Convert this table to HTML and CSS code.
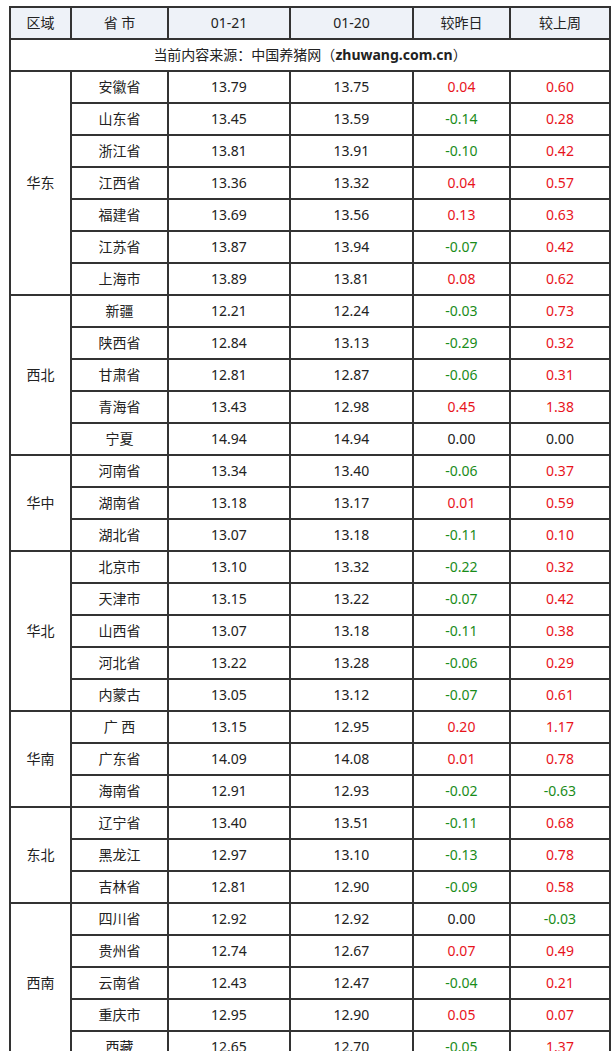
FILE: index.html
```html
<!DOCTYPE html>
<html lang="zh">
<head>
<meta charset="utf-8">
<title>生猪价格</title>
<link rel="stylesheet" href="styles.css">
</head>
<body>
<table class="price">
  <colgroup>
    <col class="c-region"><col class="c-prov"><col class="c-day"><col class="c-day2"><col class="c-diff"><col class="c-diff2">
  </colgroup>
  <thead>
    <tr class="head"><th>区域</th><th>省 市</th><th>01-21</th><th>01-20</th><th>较昨日</th><th>较上周</th></tr>
  </thead>
  <tbody>
    <tr class="source"><td colspan="6">当前内容来源：中国养猪网（<b>zhuwang.com.cn</b>）</td></tr>
    <tr><td rowspan="7">华东</td><td>安徽省</td><td>13.79</td><td>13.75</td><td class="up">0.04</td><td class="up">0.60</td></tr>
    <tr><td>山东省</td><td>13.45</td><td>13.59</td><td class="down">-0.14</td><td class="up">0.28</td></tr>
    <tr><td>浙江省</td><td>13.81</td><td>13.91</td><td class="down">-0.10</td><td class="up">0.42</td></tr>
    <tr><td>江西省</td><td>13.36</td><td>13.32</td><td class="up">0.04</td><td class="up">0.57</td></tr>
    <tr><td>福建省</td><td>13.69</td><td>13.56</td><td class="up">0.13</td><td class="up">0.63</td></tr>
    <tr><td>江苏省</td><td>13.87</td><td>13.94</td><td class="down">-0.07</td><td class="up">0.42</td></tr>
    <tr><td>上海市</td><td>13.89</td><td>13.81</td><td class="up">0.08</td><td class="up">0.62</td></tr>
    <tr><td rowspan="5">西北</td><td>新疆</td><td>12.21</td><td>12.24</td><td class="down">-0.03</td><td class="up">0.73</td></tr>
    <tr><td>陕西省</td><td>12.84</td><td>13.13</td><td class="down">-0.29</td><td class="up">0.32</td></tr>
    <tr><td>甘肃省</td><td>12.81</td><td>12.87</td><td class="down">-0.06</td><td class="up">0.31</td></tr>
    <tr><td>青海省</td><td>13.43</td><td>12.98</td><td class="up">0.45</td><td class="up">1.38</td></tr>
    <tr><td>宁夏</td><td>14.94</td><td>14.94</td><td>0.00</td><td>0.00</td></tr>
    <tr><td rowspan="3">华中</td><td>河南省</td><td>13.34</td><td>13.40</td><td class="down">-0.06</td><td class="up">0.37</td></tr>
    <tr><td>湖南省</td><td>13.18</td><td>13.17</td><td class="up">0.01</td><td class="up">0.59</td></tr>
    <tr><td>湖北省</td><td>13.07</td><td>13.18</td><td class="down">-0.11</td><td class="up">0.10</td></tr>
    <tr><td rowspan="5">华北</td><td>北京市</td><td>13.10</td><td>13.32</td><td class="down">-0.22</td><td class="up">0.32</td></tr>
    <tr><td>天津市</td><td>13.15</td><td>13.22</td><td class="down">-0.07</td><td class="up">0.42</td></tr>
    <tr><td>山西省</td><td>13.07</td><td>13.18</td><td class="down">-0.11</td><td class="up">0.38</td></tr>
    <tr><td>河北省</td><td>13.22</td><td>13.28</td><td class="down">-0.06</td><td class="up">0.29</td></tr>
    <tr><td>内蒙古</td><td>13.05</td><td>13.12</td><td class="down">-0.07</td><td class="up">0.61</td></tr>
    <tr><td rowspan="3">华南</td><td>广 西</td><td>13.15</td><td>12.95</td><td class="up">0.20</td><td class="up">1.17</td></tr>
    <tr><td>广东省</td><td>14.09</td><td>14.08</td><td class="up">0.01</td><td class="up">0.78</td></tr>
    <tr><td>海南省</td><td>12.91</td><td>12.93</td><td class="down">-0.02</td><td class="down">-0.63</td></tr>
    <tr><td rowspan="3">东北</td><td>辽宁省</td><td>13.40</td><td>13.51</td><td class="down">-0.11</td><td class="up">0.68</td></tr>
    <tr><td>黑龙江</td><td>12.97</td><td>13.10</td><td class="down">-0.13</td><td class="up">0.78</td></tr>
    <tr><td>吉林省</td><td>12.81</td><td>12.90</td><td class="down">-0.09</td><td class="up">0.58</td></tr>
    <tr><td rowspan="5">西南</td><td>四川省</td><td>12.92</td><td>12.92</td><td>0.00</td><td class="down">-0.03</td></tr>
    <tr><td>贵州省</td><td>12.74</td><td>12.67</td><td class="up">0.07</td><td class="up">0.49</td></tr>
    <tr><td>云南省</td><td>12.43</td><td>12.47</td><td class="down">-0.04</td><td class="up">0.21</td></tr>
    <tr><td>重庆市</td><td>12.95</td><td>12.90</td><td class="up">0.05</td><td class="up">0.07</td></tr>
    <tr><td>西藏</td><td>12.65</td><td>12.70</td><td class="down">-0.05</td><td class="up">1.37</td></tr>
  </tbody>
</table>
</body>
</html>
```
FILE: styles.css
```css
html, body {
  margin: 0;
  padding: 0;
  background: #ffffff;
}
body {
  padding: 6px 0 0 9px;
  font-family: "Noto Sans", "Noto Sans CJK SC", sans-serif;
  font-size: 14px;
  color: #222222;
}
.price {
  border-collapse: collapse;
  table-layout: fixed;
  width: 600px;
}
.c-region { width: 61px; }
.c-prov { width: 97px; }
.c-day { width: 122px; }
.c-day2 { width: 123px; }
.c-diff { width: 97px; }
.c-diff2 { width: 100px; }
.price th,
.price td {
  border: 2px solid #333333;
  height: 30px;
  padding: 0;
  text-align: center;
  vertical-align: middle;
  font-weight: normal;
  line-height: 20px;
}
.price .head th {
  background: #eef2f8;
}
.price .source td {
  font-size: 14px;
}
.price .source b {
  font-weight: bold;
}
.price td.up { color: #e8141c; }
.price td.down { color: #1a8c1a; }
```
